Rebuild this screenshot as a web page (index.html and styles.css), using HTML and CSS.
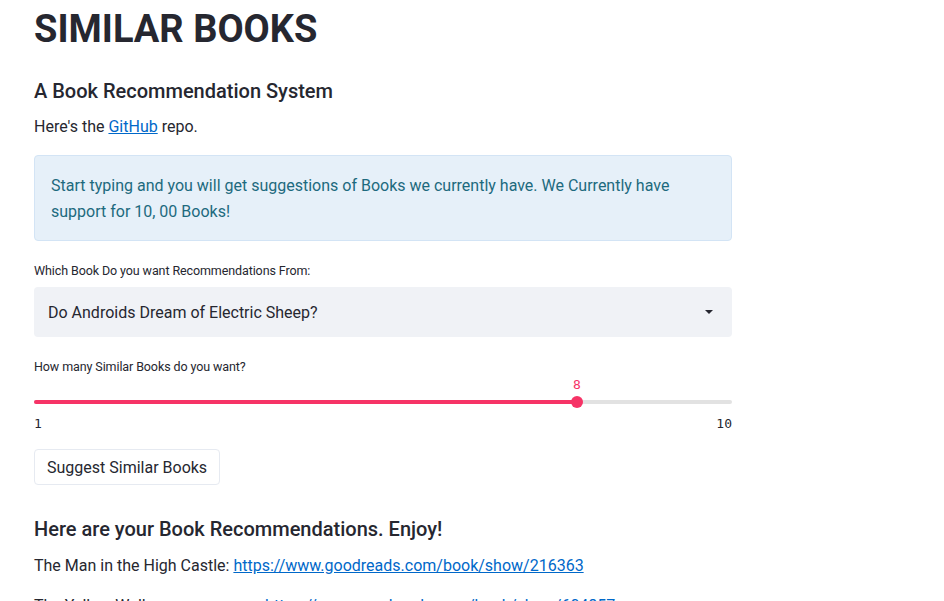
FILE: index.html
```html
<!DOCTYPE html>
<html lang="en">
<head>
<meta charset="utf-8">
<title>Similar Books</title>
<link rel="stylesheet" href="styles.css">
</head>
<body>
<main class="main">
  <h1 class="title">SIMILAR BOOKS</h1>
  <h3 class="subtitle">A Book Recommendation System</h3>
  <p class="text">Here's the <a href="#" class="link">GitHub</a> repo.</p>
  <div class="info">Start typing and you will get suggestions of Books we currently have. We Currently have support for 10, 00 Books!</div>
  <div class="widget">
    <label class="label">Which Book Do you want Recommendations From:</label>
    <div class="select">
      <span class="select-value">Do Androids Dream of Electric Sheep?</span>
      <svg class="caret" width="10" height="6" viewBox="0 0 10 6"><path d="M1 1 H9 L5 5 Z" fill="#262730"/></svg>
    </div>
  </div>
  <div class="widget slider-widget">
    <label class="label">How many Similar Books do you want?</label>
    <div class="slider">
      <div class="track"><div class="fill" style="width: 77.8%"></div></div>
      <div class="thumb" style="left: 77.8%"><span class="thumb-value">8</span></div>
    </div>
    <div class="ticks"><span>1</span><span>10</span></div>
  </div>
  <button class="btn">Suggest Similar Books</button>
  <h3 class="subtitle results-title">Here are your Book Recommendations. Enjoy!</h3>
  <p class="text rec">The Man in the High Castle: <a href="#" class="link">https://www.goodreads.com/book/show/216363</a></p>
  <p class="text rec">The Yellow Wallpaper summary: <a href="#" class="link">https://www.goodreads.com/book/show/604857</a></p>
</main>
</body>
</html>
```
FILE: styles.css
```css
html, body {
  margin: 0;
  padding: 0;
  background: #ffffff;
}
body {
  font-family: Roboto, "Noto Sans", sans-serif;
  color: #262730;
  font-size: 16px;
}
.main {
  width: 698px;
  padding: 0 0 0 34px;
}
.title {
  font-size: 38px;
  font-weight: 700;
  margin: 0;
  padding-top: 6px;
  line-height: 46px;
  letter-spacing: 0;
  color: #262730;
}
.subtitle {
  font-size: 20px;
  font-weight: 500;
  margin: 26px 0 0 0;
  line-height: 26px;
}
.text {
  margin: 11px 0 0 0;
  line-height: 24px;
}
.link {
  color: #0068c9;
  text-decoration: underline;
}
.info {
  margin-top: 16px;
  background: #e6f0f9;
  border: 1px solid #d3e4f5;
  border-radius: 4px;
  padding: 17px 16px 15px 16px;
  color: #1d6a7e;
  line-height: 26px;
}
.widget {
  margin-top: 22px;
}
.label {
  display: block;
  font-size: 12.5px;
  line-height: 16px;
  color: #262730;
  letter-spacing: -0.1px;
}
.select {
  margin-top: 8px;
  height: 50px;
  background: #f0f2f6;
  border-radius: 4px;
  display: flex;
  align-items: center;
  justify-content: space-between;
  padding: 0 18px 0 14px;
}
.slider-widget {
  margin-top: 22px;
}
.slider {
  position: relative;
  margin-top: 21px;
  height: 12px;
  display: flex;
  align-items: center;
}
.track {
  flex: 1;
  height: 4px;
  background: #e2e2e2;
  border-radius: 2px;
}
.fill {
  height: 4px;
  background: #f63366;
  border-radius: 2px;
}
.thumb {
  position: absolute;
  top: 0;
  width: 12px;
  height: 12px;
  margin-left: -6px;
  border-radius: 50%;
  background: #f63366;
}
.thumb-value {
  position: absolute;
  bottom: 16px;
  left: 50%;
  transform: translateX(-50%);
  font-family: "DejaVu Sans Mono", monospace;
  font-size: 13px;
  line-height: 14px;
  color: #f63366;
}
.ticks {
  display: flex;
  justify-content: space-between;
  margin-top: 9px;
  font-family: "DejaVu Sans Mono", monospace;
  font-size: 13px;
  line-height: 14px;
  color: #262730;
}
.btn {
  margin-top: 18px;
  font-family: inherit;
  font-size: 16px;
  color: #262730;
  background: #ffffff;
  border: 1px solid #e6eaf1;
  border-radius: 4px;
  padding: 0 12px;
  height: 36px;
}
.results-title {
  margin-top: 31px;
}
.rec {
  margin-top: 12px;
}
.rec + .rec {
  margin-top: 16px;
}
```
